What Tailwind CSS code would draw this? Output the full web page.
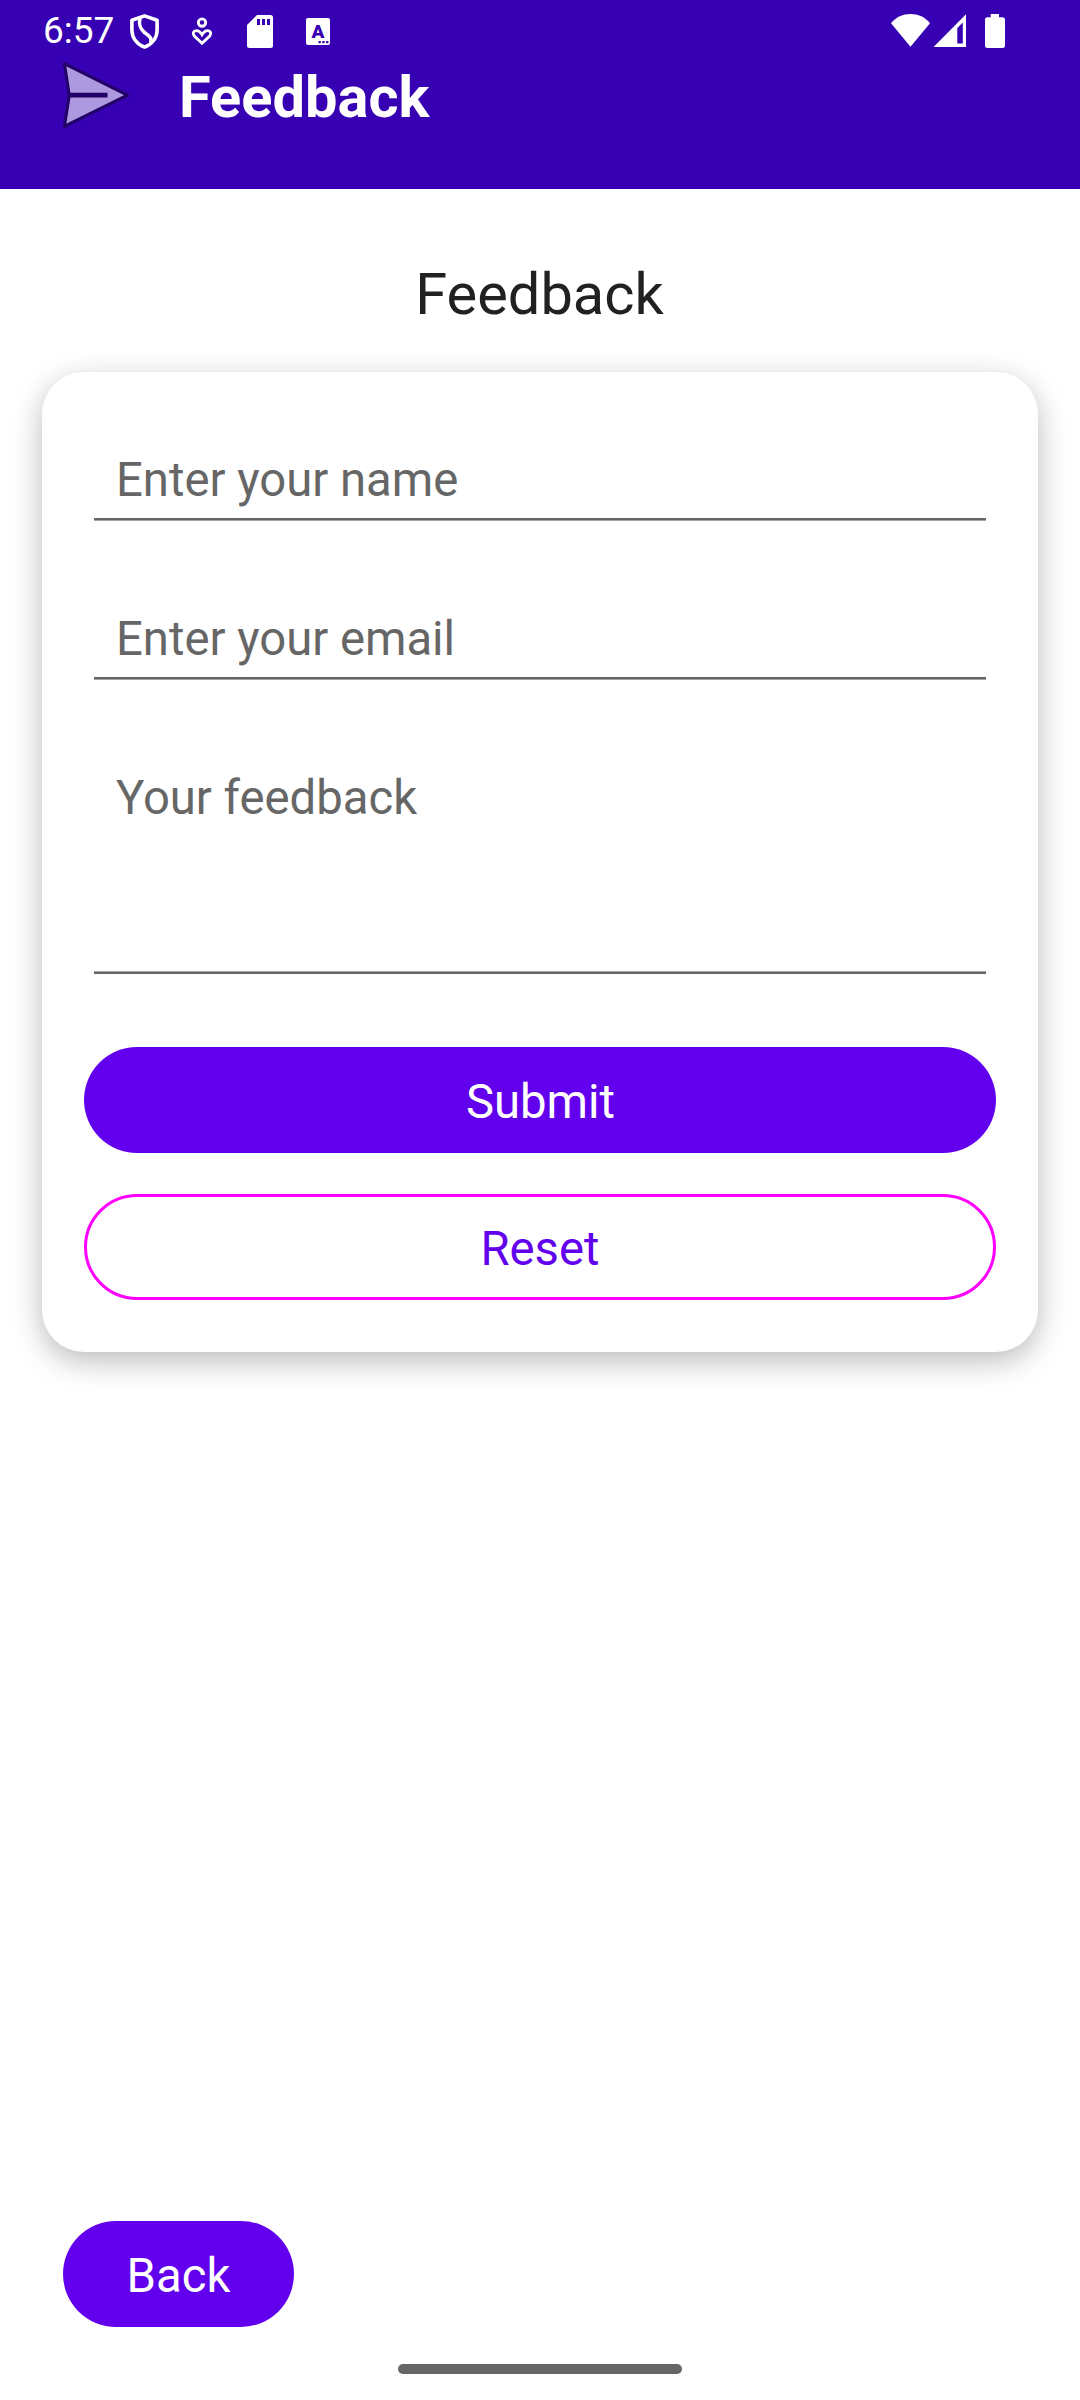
<!DOCTYPE html>
<html lang="en">
<head>
<meta charset="utf-8">
<title>Feedback</title>
<script src="https://cdn.jsdelivr.net/npm/@tailwindcss/browser@4"></script>
</head>
<body class="bg-white font-[Roboto,sans-serif]">
<div class="flex h-[2400px] w-[1080px] flex-col overflow-hidden bg-white">
  <header class="h-[189px] shrink-0 bg-[#3700b3] text-white">
    <div class="flex h-[60px] items-start pr-[75px] pl-[43px] pt-[14px]">
      <span class="mt-[-5px] w-[87px] text-[37px] leading-[44px]">6:57</span>
      <svg class="h-[35px] w-[29px]" viewBox="0 0 29 35" fill="none" stroke="#fff" stroke-width="3.600" stroke-linejoin="round"><path d="M14.500 1.900 27.100 6.300V16C27.100 24 22 30.300 14.500 33.100 7 30.300 1.900 24 1.900 16V6.300Z"/><path d="M10 4C8.500 11 10 14.500 14 18 19 22 22.500 23.500 20.500 29"/></svg>
      <svg class="ml-[31px] h-[35px] w-[24px]" viewBox="0 0 24 35" fill="none" stroke="#fff" stroke-width="2.900"><circle cx="12" cy="8.600" r="3.700"/><path d="M12 29.300 4.300 22C2.300 19.500 3.300 16.800 6.300 16.600 9.500 16.500 10.600 18.300 12 20.600 13.400 18.300 14.500 16.500 17.700 16.600 20.700 16.800 21.700 19.500 19.700 22Z"/></svg>
      <svg class="ml-[33px] h-[35px] w-[26px]" viewBox="0 0 26 35"><path fill="#fff" d="M10 1H23.500Q26 1 26 3.500V31.500Q26 34 23.500 34H2.500Q0 34 0 31.500V11Z"/><path fill="#3700b3" d="M10 5h3v6h-3zM15 5h3v6h-3zM20 5h3v6h-3z"/></svg>
      <svg class="ml-[33px] h-[35px] w-[24px]" viewBox="0 0 24 35"><rect y="4" width="24" height="27" rx="2" fill="#fff"/><text x="12" y="24" text-anchor="middle" font-family="Roboto" font-weight="900" font-size="19" fill="#3700b3">A</text><path fill="#3700b3" d="M12.500 27h2.300v2.300h-2.300zM16.300 27h2.300v2.300h-2.300zM20.100 27h2.300v2.300h-2.300z"/></svg>
      <svg class="ml-auto h-[34px] w-[39px]" viewBox="0 0 39 34"><path fill="#fff" d="M0 9.300C5 3 12 0 19.500 0S34 3 39 9.300L19.500 32.800Z"/></svg>
      <svg class="ml-[3px] h-[34px] w-[33px]" viewBox="0 0 33 34"><path fill="#fff" fill-rule="evenodd" d="M.5 33 33 .3V33ZM24.300 29.500H29.800V8.500L24.300 14Z"/></svg>
      <svg class="ml-[19px] h-[34px] w-[20px]" viewBox="0 0 20 34"><path fill="#fff" d="M5.700 0H14V3.300H17.500Q20 3.300 20 5.800V31.500Q20 34 17.500 34H2.500Q0 34 0 31.500V5.800Q0 3.300 2.500 3.300H5.700Z"/></svg>
    </div>
    <div class="flex items-start pl-[60px]">
      <svg class="h-[72px] w-[72px]" viewBox="0 0 72 72"><path d="M4.400 3.600 67.400 35.200 4.400 66.400 9.300 35.200Z" fill="#ad99df" stroke="#220066" stroke-width="3" stroke-linejoin="round"/><path d="M9.500 35.200H47.500" stroke="#220066" stroke-width="4.800"/></svg>
      <h1 class="mt-[3px] ml-[47px] text-[57.75px] leading-[68px] font-bold">Feedback</h1>
    </div>
  </header>

  <main class="flex grow flex-col px-[42px] pt-[71px]">
    <h2 class="pr-[1px] text-center text-[57.75px] leading-[68px] text-[#212121]">Feedback</h2>
    <section class="mt-[44px] flex h-[980px] flex-col rounded-[42px] bg-white px-[42px] pt-[80px] text-[47.25px] leading-[56px] shadow-[0_9px_30px_rgba(0,0,0,0.27)]">
      <div class="mx-[10px] text-[#666666]">
        <div class="pl-[22px]">Enter your name</div>
        <div class="mt-[10px] h-[3px] bg-[linear-gradient(#666666_2px,#a3a3a3_2px)]"></div>
      </div>
      <div class="mx-[10px] mt-[90px] text-[#666666]">
        <div class="pl-[22px]">Enter your email</div>
        <div class="mt-[10px] h-[3px] bg-[linear-gradient(#666666_2px,#a3a3a3_2px)]"></div>
      </div>
      <div class="mx-[10px] mt-[90px] text-[#666666]">
        <div class="h-[201px] pl-[22px]">Your feedback</div>
        <div class="h-[3px] bg-[linear-gradient(#a3a3a3_1px,#666666_1px)]"></div>
      </div>
      <button class="mt-[73px] h-[106px] rounded-full bg-[#6200ee] pt-[4px] pl-[1px] text-white">Submit</button>
      <button class="mt-[41px] h-[106px] rounded-full border-[3px] border-[#ff00ff] pt-[4px] text-[#6200ee]">Reset</button>
    </section>
    <button class="mt-auto mb-[73px] ml-[21px] h-[106px] w-[231px] rounded-full bg-[#6200ee] pt-[4px] text-[47.25px] leading-[56px] text-white">Back</button>
  </main>
  <div class="absolute top-[2364px] left-[398px] h-[10px] w-[284px] rounded-full bg-[#666666]"></div>
</div>
</body>
</html>
